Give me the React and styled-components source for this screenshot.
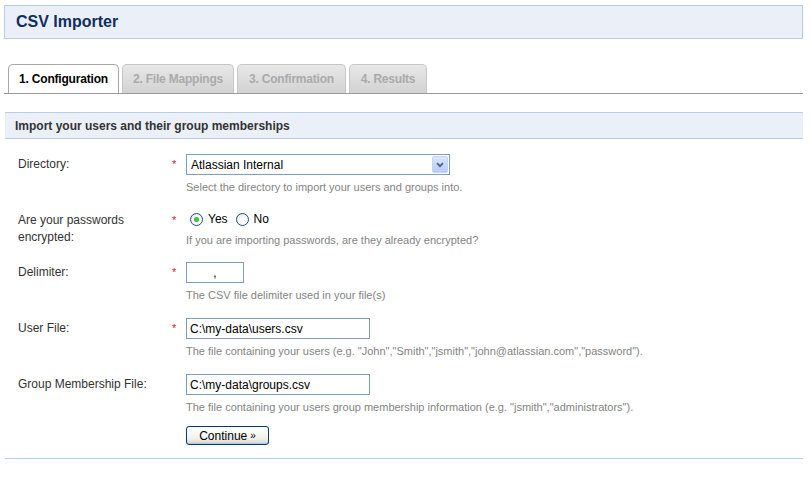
import styled, { createGlobalStyle } from "styled-components";

const GlobalStyle = createGlobalStyle`
  body {
    margin: 0;
    background: #fff;
    font-family: "Liberation Sans", Arial, sans-serif;
    font-size: 12px;
    color: #333;
  }
`;

const Page = styled.div`
  padding: 5px 7px 0 4px;
`;

const Header = styled.div`
  height: 32px;
  background: #ebf0f8;
  border: 1px solid #b8cde8;
  display: flex;
  align-items: center;
  padding-left: 11px;
`;

const Title = styled.h1`
  margin: 0;
  font-size: 16px;
  font-weight: bold;
  color: #112e60;
`;

const Tabs = styled.div`
  margin-top: 25px;
  display: flex;
  gap: 3px;
  padding-left: 4px;
  border-bottom: 1px solid #999;
`;

const Tab = styled.div`
  width: ${(p) => p.$w}px;
  box-sizing: border-box;
  height: 29px;
  display: flex;
  align-items: center;
  justify-content: center;
  font-weight: bold;
  font-size: 12px;
  letter-spacing: -0.2px;
  border: 1px solid ${(p) => (p.$active ? "#a8a8a8" : "#c6c6c6")};
  border-bottom: none;
  border-radius: 5px 5px 0 0;
  color: ${(p) => (p.$active ? "#000" : "#aaa")};
  background: ${(p) =>
    p.$active ? "#fff" : "linear-gradient(#e8e8e8, #d2d2d2)"};
`;

const Section = styled.div`
  margin-top: 18px;
  margin-left: 1px;
  height: 25px;
  background: #ebf0f8;
  border-top: 1px solid #b8cde8;
  border-bottom: 1px solid #b8cde8;
  display: flex;
  align-items: center;
  padding-left: 10px;
  font-weight: bold;
  color: #333;
`;

const Form = styled.div`
  padding: 15px 0 0 13px;
  margin-left: 1px;
  border-bottom: 1px solid #b8cde8;
`;

const Row = styled.div`
  display: grid;
  grid-template-columns: 154px 14px 1fr;
  margin-bottom: ${(p) => p.$gap ?? 16}px;
`;

const Label = styled.div`
  padding-top: 2px;
  line-height: 17px;
  color: #333;
  padding-right: 10px;
`;

const Req = styled.div`
  color: #d02020;
  padding-top: 2px;
  line-height: 17px;
  font-size: 11px;
`;

const Field = styled.div`
  display: flex;
  flex-direction: column;
  align-items: flex-start;
`;

const Desc = styled.div`
  margin-top: 5px;
  line-height: 14px;
  font-size: 11px;
  color: #848484;
`;

const SelectBox = styled.div`
  position: relative;
  width: 258px;
  height: 19px;
  border: 1px solid #7f9db9;
  display: flex;
  align-items: center;
  padding-left: 4px;
  box-sizing: content-box;
  color: #000;
  font-size: 12px;
`;

const Arrow = styled.div`
  position: absolute;
  right: 1px;
  top: 1px;
  width: 16px;
  height: 17px;
  background: linear-gradient(#dce6fd, #b7cbf7);
  border: 1px solid #c3d3fd;
  box-sizing: border-box;
  border-radius: 2px;
  display: flex;
  align-items: center;
  justify-content: center;
`;

const TextInput = styled.input`
  width: ${(p) => p.$w}px;
  height: 21px;
  box-sizing: border-box;
  border: 1px solid #7f9db9;
  padding: 0 3px;
  font-family: "Liberation Sans", Arial, sans-serif;
  font-size: 12px;
  color: #000;
  text-align: ${(p) => p.$align || "left"};
  outline: none;
`;

const Radios = styled.div`
  height: 18px;
  display: flex;
  align-items: center;
  padding-left: 4px;
  gap: 5px;
  color: #000;
  font-size: 12px;
`;

const Radio = styled.span`
  width: 13px;
  height: 13px;
  box-sizing: border-box;
  border: 1px solid #1c5180;
  border-radius: 50%;
  background: radial-gradient(circle at 65% 65%, #fff 30%, #dcdcd6);
  display: inline-flex;
  align-items: center;
  justify-content: center;
  &::after {
    content: "";
    width: 5px;
    height: 5px;
    border-radius: 50%;
    background: ${(p) => (p.$on ? "radial-gradient(#55d155, #21a121)" : "transparent")};
  }
`;

const RadioText = styled.span`
  margin-right: 3px;
`;

const Button = styled.button`
  margin: 0 0 13px 168px;
  width: 83px;
  height: 19px;
  border: 1px solid #003c74;
  border-radius: 3px;
  background: linear-gradient(#ffffff, #f0f0ea 70%, #d6d0c5);
  box-shadow: inset 0 -1px 0 #b0c4e8;
  font-family: "Liberation Sans", Arial, sans-serif;
  font-size: 12px;
  color: #000;
  padding: 0;
  display: flex;
  align-items: center;
  justify-content: center;
  gap: 3px;
  small {
    font-size: 10px;
  }
`;

export default function App() {
  return (
    <Page>
      <GlobalStyle />
      <Header>
        <Title>CSV Importer</Title>
      </Header>
      <Tabs>
        <Tab $w={111} $active>1. Configuration</Tab>
        <Tab $w={112}>2. File Mappings</Tab>
        <Tab $w={109}>3. Confirmation</Tab>
        <Tab $w={78}>4. Results</Tab>
      </Tabs>
      <Section>Import your users and their group memberships</Section>
      <Form>
        <Row>
          <Label>Directory:</Label>
          <Req>*</Req>
          <Field>
            <SelectBox>
              Atlassian Internal
              <Arrow>
                <svg width="8" height="6" viewBox="0 0 8 6">
                  <path d="M1 1.2 L4 4.2 L7 1.2" fill="none" stroke="#4d6185" strokeWidth="1.8" />
                </svg>
              </Arrow>
            </SelectBox>
            <Desc>Select the directory to import your users and groups into.</Desc>
          </Field>
        </Row>
        <Row $gap={15}>
          <Label>Are your passwords encrypted:</Label>
          <Req>*</Req>
          <Field>
            <Radios>
              <Radio $on />
              <RadioText>Yes</RadioText>
              <Radio />
              <RadioText>No</RadioText>
            </Radios>
            <Desc>If you are importing passwords, are they already encrypted?</Desc>
          </Field>
        </Row>
        <Row>
          <Label>Delimiter:</Label>
          <Req>*</Req>
          <Field>
            <TextInput $w={58} $align="center" defaultValue="," />
            <Desc>The CSV file delimiter used in your file(s)</Desc>
          </Field>
        </Row>
        <Row>
          <Label>User File:</Label>
          <Req>*</Req>
          <Field>
            <TextInput $w={184} defaultValue="C:\my-data\users.csv" />
            <Desc>
              The file containing your users (e.g.
              "John","Smith","jsmith","john@atlassian.com","password").
            </Desc>
          </Field>
        </Row>
        <Row $gap={12}>
          <Label>Group Membership File:</Label>
          <Req />
          <Field>
            <TextInput $w={184} defaultValue="C:\my-data\groups.csv" />
            <Desc>
              The file containing your users group membership information (e.g.
              "jsmith","administrators").
            </Desc>
          </Field>
        </Row>
        <Button>
          Continue <small>»</small>
        </Button>
      </Form>
    </Page>
  );
}
